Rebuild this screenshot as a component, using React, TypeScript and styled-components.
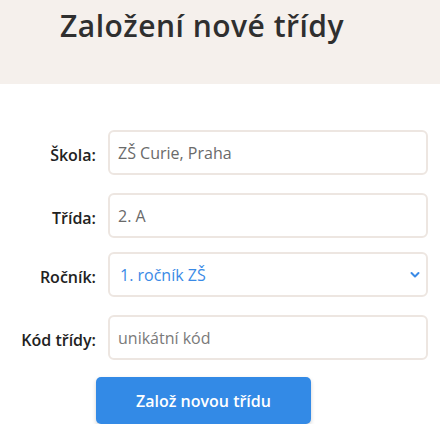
import styled, { createGlobalStyle } from "styled-components";

const GlobalStyle = createGlobalStyle`
  html, body {
    margin: 0;
    padding: 0;
    background: #ffffff;
    font-family: "Open Sans", "Noto Sans", sans-serif;
  }
  * {
    box-sizing: border-box;
  }
`;

const Header = styled.header`
  height: 84px;
  background: #f5f0ec;
  padding: 6px 0 0 60px;
`;

const Title = styled.h1`
  margin: 0;
  font-size: 30px;
  font-weight: 600;
  line-height: 40px;
  color: #2f2f2f;
  letter-spacing: 0.5px;
`;

const Form = styled.form`
  display: flex;
  flex-direction: column;
  padding: 46px 12px 0 0;
`;

const Row = styled.div<{ $gap: number }>`
  display: grid;
  grid-template-columns: 96px 1fr;
  column-gap: 12px;
  align-items: center;
  margin-bottom: ${(p) => p.$gap}px;
`;

const Label = styled.label`
  text-align: right;
  font-size: 16px;
  font-weight: 600;
  color: #222222;
  padding-top: 5px;
  white-space: nowrap;
`;

const Field = styled.input`
  height: 45px;
  width: 100%;
  border: 2px solid #ede6e1;
  border-radius: 6px;
  padding: 0 8px;
  font-family: inherit;
  font-size: 16px;
  color: #6a6a6a;
  background: #ffffff;
  outline: none;

  &::placeholder {
    color: #7a7a7a;
  }
`;

const SelectWrap = styled.div`
  position: relative;
  height: 45px;
`;

const Select = styled.select`
  appearance: none;
  height: 45px;
  width: 100%;
  border: 2px solid #ede6e1;
  border-radius: 6px;
  padding: 0 28px 0 10px;
  font-family: inherit;
  font-size: 16px;
  color: #3a8ae6;
  background: #ffffff;
  outline: none;
`;

const Chevron = styled.svg`
  position: absolute;
  right: 8px;
  top: 19px;
  width: 10px;
  height: 8px;
  pointer-events: none;
`;

const Button = styled.button`
  margin: 0 0 0 96px;
  width: 215px;
  height: 47px;
  border: none;
  border-radius: 5px;
  background: #338ae6;
  color: #ffffff;
  font-family: inherit;
  font-size: 16px;
  font-weight: 600;
  box-shadow: 0 2px 4px rgba(0, 0, 0, 0.18);
  cursor: pointer;
`;

export default function App() {
  return (
    <>
      <GlobalStyle />
      <Header>
        <Title>Založení nové třídy</Title>
      </Header>
      <Form onSubmit={(e) => e.preventDefault()}>
        <Row $gap={18}>
          <Label>Škola:</Label>
          <Field defaultValue="ZŠ Curie, Praha" />
        </Row>
        <Row $gap={14}>
          <Label>Třída:</Label>
          <Field defaultValue="2. A" />
        </Row>
        <Row $gap={18}>
          <Label>Ročník:</Label>
          <SelectWrap>
            <Select defaultValue="1">
              <option value="1">1. ročník ZŠ</option>
              <option value="2">2. ročník ZŠ</option>
              <option value="3">3. ročník ZŠ</option>
            </Select>
            <Chevron viewBox="0 0 10 8">
              <path
                d="M1.5 2 L5 5.5 L8.5 2"
                fill="none"
                stroke="#3a8ae6"
                strokeWidth="2"
                strokeLinecap="round"
                strokeLinejoin="round"
              />
            </Chevron>
          </SelectWrap>
        </Row>
        <Row $gap={17}>
          <Label>Kód třídy:</Label>
          <Field placeholder="unikátní kód" />
        </Row>
        <Button type="submit">Založ novou třídu</Button>
      </Form>
    </>
  );
}
